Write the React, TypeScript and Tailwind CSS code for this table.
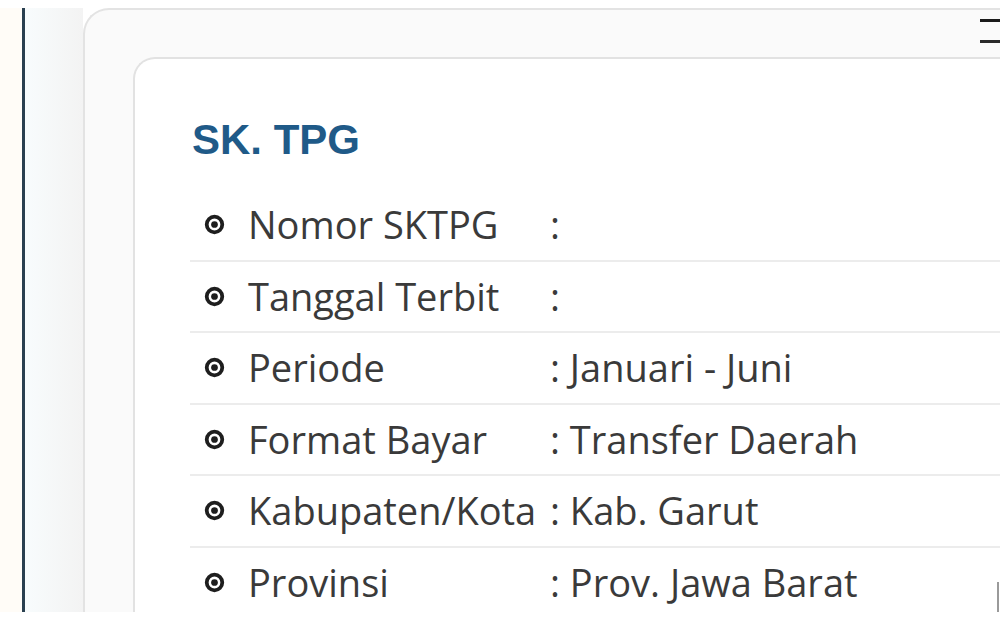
const rows = [
  { label: "Nomor SKTPG", value: "" },
  { label: "Tanggal Terbit", value: "" },
  { label: "Periode", value: "Januari - Juni" },
  { label: "Format Bayar", value: "Transfer Daerah" },
  { label: "Kabupaten/Kota", value: "Kab. Garut" },
  { label: "Provinsi", value: "Prov. Jawa Barat" },
];

function Bullet() {
  return (
    <svg width="21" height="21" viewBox="0 0 20 20" className="shrink-0 -ml-[1px]">
      <circle cx="10" cy="10" r="7.4" fill="none" stroke="#1e1e1e" strokeWidth="3.6" />
      <circle cx="10" cy="10" r="3.2" fill="#1e1e1e" />
    </svg>
  );
}

export default function App() {
  return (
    <div className="w-[1000px] h-[635px] bg-white relative overflow-hidden">
      <div className="flex h-[612px] pt-[8px] overflow-hidden">
        <div className="w-[22px] bg-[#fffcf7]" />
        <div className="w-[3px] bg-[#2a4050]" />
        <div className="w-[58px] bg-gradient-to-r from-[#f8fcfd] to-[#f3f3f3]" />
        <div className="flex-1 relative border-l-2 border-t-2 border-[#e3e3e3] rounded-tl-[26px] bg-[#fafafa] pl-[48px] pt-[47px]">
          <div className="absolute right-0 top-[9px] w-[20px] flex flex-col gap-[18px]">
            <div className="h-[3px] bg-[#1a1a1a]" />
            <div className="h-[3px] bg-[#2a2a2a]" />
          </div>
          <div className="h-full border-l-2 border-t-2 border-[#e2e2e2] rounded-tl-[22px] bg-white pl-[55px] pt-[56px]">
            <h2 className="text-[42px] leading-[50px] font-bold text-[#1f5a88] font-['Liberation_Sans',Arial,sans-serif] pl-[2px]">
              SK. TPG
            </h2>
            <div className="mt-[25px] font-['Open_Sans',sans-serif] text-[38px] text-[#3a3a3a]">
              {rows.map((r) => (
                <div
                  key={r.label}
                  className="h-[71.5px] flex items-center border-b-2 border-[#ececec] pl-[15px]"
                >
                  <Bullet />
                  <span className="w-[325px] shrink-0 pl-[23px] whitespace-nowrap">{r.label}</span>
                  <span className="whitespace-nowrap">: {r.value}</span>
                </div>
              ))}
            </div>
          </div>
        </div>
      </div>
      <div className="absolute right-[1px] top-[582px] w-[2px] h-[30px] bg-[#9a9a9a]" />
    </div>
  );
}
